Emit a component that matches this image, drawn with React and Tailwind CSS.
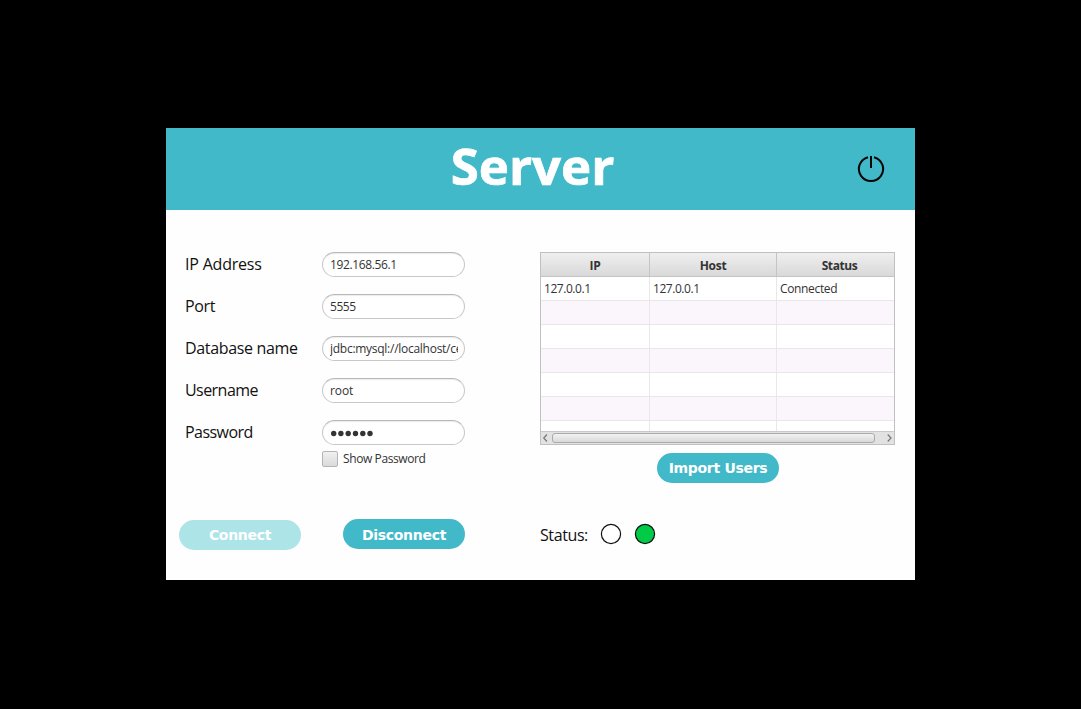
const fields = [
  { label: "IP Address", value: "192.168.56.1", tracking: "tracking-[-0.2px]", vt: "tracking-[-0.38px]" },
  { label: "Port", value: "5555", tracking: "tracking-[-0.34px]", vt: "tracking-[-0.45px]" },
  { label: "Database name", value: "jdbc:mysql://localhost/ce", tracking: "tracking-[-0.34px]", vt: "tracking-[-0.27px]" },
  { label: "Username", value: "root", tracking: "tracking-[-0.55px]", vt: "tracking-[-0.1px]" },
  { label: "Password", value: "", tracking: "tracking-[-0.55px]", vt: "" },
];

const rows = [
  ["127.0.0.1", "127.0.0.1", "Connected"],
  ["", "", ""],
  ["", "", ""],
  ["", "", ""],
  ["", "", ""],
  ["", "", ""],
  ["", "", ""],
];

function Field({ label, value, tracking, vt }) {
  return (
    <div className="flex h-[25px] items-center">
      <label className={`w-[137px] shrink-0 whitespace-nowrap text-[16px] leading-[25px] text-[#111] ${tracking}`}>
        {label}
      </label>
      <div className="h-[25px] w-[143px] rounded-full border border-[#c8c8c8] border-t-[#b8b8b8] bg-white pl-[7px] pr-[6px] shadow-[inset_0_1px_1px_#ececec]">
        <div className={`h-[23px] overflow-hidden whitespace-nowrap text-[12px] leading-[23px] text-[#333] ${vt}`}>
          {value || (
            <svg width="46" height="23" viewBox="0 0 46 23" fill="#333">
              {[3.7, 10.9, 18.2, 25.5, 32.8, 40].map((x) => (
                <circle key={x} cx={x} cy="12.5" r="2.7" />
              ))}
            </svg>
          )}
        </div>
      </div>
    </div>
  );
}

function Table() {
  return (
    <div className="flex h-[193px] w-[355px] flex-col overflow-hidden border border-[#c0c0c0] bg-white">
      <div className="grid h-[24px] shrink-0 grid-cols-[109px_127px_117px] border-b border-[#c4c4c4] bg-linear-to-b from-[#efefef] to-[#d9d9d9] text-center text-[12px] font-bold leading-[25px] tracking-[-0.3px] text-[#333]">
        <div className="border-r border-[#c4c4c4]">IP</div>
        <div className="border-r border-[#c4c4c4]">Host</div>
        <div className="pl-[8px] tracking-[-0.4px]">Status</div>
      </div>
      <div className="min-h-0 flex-1 overflow-hidden">
        {rows.map((row, i) => (
          <div
            key={i}
            className={`grid h-[24px] grid-cols-[109px_127px_117px] border-b border-[#e8e8e8] text-[12px] leading-[23px] text-[#333] ${i % 2 ? "bg-[#faf6fb]" : "bg-white"}`}
          >
            <div className="border-r border-[#e8e8e8] pl-[3px] tracking-[-0.45px]">{row[0]}</div>
            <div className="border-r border-[#e8e8e8] pl-[3px] tracking-[-0.45px]">{row[1]}</div>
            <div className="pl-[3px] tracking-[-0.35px]">{row[2]}</div>
          </div>
        ))}
      </div>
      <div className="flex h-[13px] shrink-0 items-center border-t border-[#c8c8c8] bg-[#e2e2e2]">
        <svg className="w-[11px]" height="12" viewBox="0 0 11 12" fill="none" stroke="#777" strokeWidth="1.2">
          <path d="M6 2.5 2.7 6 6 9.5" />
        </svg>
        <div className="h-[10px] w-[323px] rounded-[3px] border border-[#aaa] bg-linear-to-b from-[#f2f2f2] to-[#d9d9d9]" />
        <svg className="ml-[9px] w-[10px]" height="12" viewBox="0 0 10 12" fill="none" stroke="#777" strokeWidth="1.2">
          <path d="M3.7 2.5 7 6 3.7 9.5" />
        </svg>
      </div>
    </div>
  );
}

function PillButton({ children, className }) {
  return (
    <button
      className={`h-[30px] w-[122px] whitespace-nowrap rounded-full text-center font-['DejaVu_Sans',sans-serif] text-[14px] font-bold text-white ${className}`}
    >
      {children}
    </button>
  );
}

export default function App() {
  return (
    <div className="flex h-[709px] w-[1081px] flex-col bg-black pl-[166px] pt-[128px] font-['Open_Sans','Noto_Sans',sans-serif]">
      <div className="flex h-[452px] w-[749px] flex-col bg-[#fefefe]">
        <header className="flex h-[82px] shrink-0 items-center bg-[#41b9c9]">
          <h1 className="w-[692px] whitespace-nowrap pb-[8px] pl-[41px] text-center font-['Open_Sans',sans-serif] text-[51px] font-bold leading-[60px] text-white [-webkit-text-stroke:0.7px_white]">
            Server
          </h1>
          <svg width="28" height="28" viewBox="0 0 28 28" fill="none" stroke="#050505" strokeWidth="2" className="-ml-[1px]">
            <path d="M11 2.2A12.1 12.1 0 1 0 17 2.2" />
            <path d="M14 1v12" />
          </svg>
        </header>
        <div className="flex pl-[19px] pt-[42px]">
          <div className="w-[355px]">
            <div className="flex flex-col gap-[17px]">
              {fields.map((f) => (
                <Field key={f.label} {...f} />
              ))}
            </div>
            <div className="ml-[137px] mt-[6px] flex h-[16px] items-center gap-[5px]">
              <div className="size-[16px] rounded-[2px] border border-[#b4b4b4] bg-linear-to-b from-[#f0f0f0] to-[#dadada]" />
              <span className="whitespace-nowrap text-[12px] leading-[16px] tracking-[-0.4px] text-[#333]">Show Password</span>
            </div>
          </div>
          <div>
            <Table />
            <PillButton className="ml-[117px] mt-[8px] block bg-[#41b9c9] leading-[30px] tracking-[-0.3px]">Import Users</PillButton>
          </div>
        </div>
        <div className="mt-[36px] flex items-start pl-[13px]">
          <PillButton className="mt-[1px] bg-[#ade4e8] leading-[30px] tracking-[-0.3px]">Connect</PillButton>
          <PillButton className="ml-[42px] bg-[#41b9c9] pt-[2px] leading-[28px] tracking-[-0.3px]">Disconnect</PillButton>
          <div className="ml-[75px] mt-[1px] w-[60px] text-[16px] leading-[30px] tracking-[-0.4px] text-[#111]">Status:</div>
          <svg className="mt-[3px]" width="58" height="24" viewBox="0 0 58 24" stroke="#111" strokeWidth="1.2">
            <circle cx="11" cy="12" r="9.6" fill="#fff" />
            <circle cx="45" cy="12" r="9.6" fill="#00ca46" />
          </svg>
        </div>
      </div>
    </div>
  );
}
